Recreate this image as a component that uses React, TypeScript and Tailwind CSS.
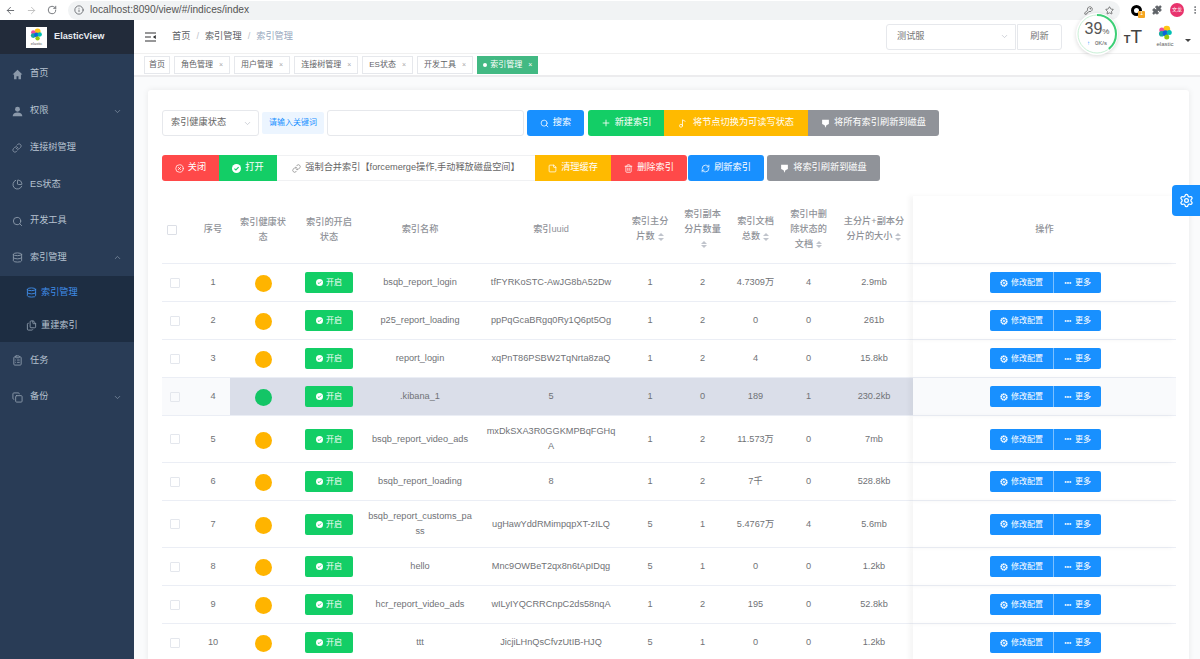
import type { ReactNode } from "react";
import {
  ArrowLeft,
  ArrowRight,
  ChartPie,
  ChevronDown,
  ChevronUp,
  CircleX,
  ClipboardList,
  Copy,
  Database,
  Ellipsis,
  EllipsisVertical,
  Files,
  Info,
  KeyRound,
  Link,
  Music2,
  Plus,
  Puzzle,
  RefreshCw,
  RotateCw,
  Search,
  Settings,
  Star,
  StickyNote,
  Trash2,
} from "lucide-react";

interface IndexRow {
  id: number;
  name: string;
  uuid: string;
  primary: number;
  replica: number;
  docs: string;
  deleted: number;
  size: string;
  green?: boolean;
}

const rows: IndexRow[] = [
  { id: 1, name: "bsqb_report_login", uuid: "tfFYRKoSTC-AwJG8bA52Dw", primary: 1, replica: 2, docs: "4.7309万", deleted: 4, size: "2.9mb" },
  { id: 2, name: "p25_report_loading", uuid: "ppPqGcaBRgq0Ry1Q6pt5Og", primary: 1, replica: 2, docs: "0", deleted: 0, size: "261b" },
  { id: 3, name: "report_login", uuid: "xqPnT86PSBW2TqNrta8zaQ", primary: 1, replica: 2, docs: "4", deleted: 0, size: "15.8kb" },
  { id: 4, name: ".kibana_1", uuid: "5", primary: 1, replica: 0, docs: "189", deleted: 1, size: "230.2kb", green: true },
  { id: 5, name: "bsqb_report_video_ads", uuid: "mxDkSXA3R0GGKMPBqFGHqA", primary: 1, replica: 2, docs: "11.573万", deleted: 0, size: "7mb" },
  { id: 6, name: "bsqb_report_loading", uuid: "8", primary: 1, replica: 2, docs: "7千", deleted: 0, size: "528.8kb" },
  { id: 7, name: "bsqb_report_customs_pass", uuid: "ugHawYddRMimpqpXT-zILQ", primary: 5, replica: 1, docs: "5.4767万", deleted: 4, size: "5.6mb" },
  { id: 8, name: "hello", uuid: "Mnc9OWBeT2qx8n6tApIDqg", primary: 5, replica: 1, docs: "0", deleted: 0, size: "1.2kb" },
  { id: 9, name: "hcr_report_video_ads", uuid: "wILyIYQCRRCnpC2ds58nqA", primary: 1, replica: 2, docs: "195", deleted: 0, size: "52.8kb" },
  { id: 10, name: "ttt", uuid: "JicjiLHnQsCfvzUtIB-HJQ", primary: 5, replica: 1, docs: "0", deleted: 0, size: "1.2kb" },
];

const tabs = ["角色管理", "用户管理", "连接树管理", "ES状态", "开发工具"];

function HomeIcon() {
  return (
    <svg viewBox="0 0 16 16" className="h-[11px] w-[11px]" fill="currentColor">
      <path d="M8 1 0.8 8H3v7h3.6v-4.5h2.8V15H13V8h2.2z" />
    </svg>
  );
}

function UserIcon() {
  return (
    <svg viewBox="0 0 16 16" className="h-[11px] w-[11px]" fill="currentColor">
      <circle cx="8" cy="4.6" r="3.6" />
      <path d="M1 15c0-3.6 2.6-5.6 7-5.6s7 2 7 5.6z" />
    </svg>
  );
}

function FlushIcon() {
  return (
    <svg viewBox="0 0 12 12" className="h-[9px] w-[9px]" fill="currentColor">
      <path d="M1.5 1h9v5.6L7.2 8.4 6 11.5 4.8 8.4 1.5 6.6z" />
    </svg>
  );
}

function CheckDot({ className }: { className: string }) {
  return (
    <svg viewBox="0 0 12 12" className={className}>
      <circle cx="6" cy="6" r="6" fill="#fff" />
      <path d="M3.2 6.2 5.2 8l3.6-3.8" fill="none" stroke="currentColor" strokeWidth="1.5" />
    </svg>
  );
}

function SmallGear() {
  return (
    <svg viewBox="0 0 12 12" className="h-[8px] w-[8px]">
      <circle cx="6" cy="6" r="4.2" fill="none" stroke="#fff" strokeWidth="2.6" strokeDasharray="2 0.5" />
      <circle cx="6" cy="6" r="1.4" fill="#fff" />
    </svg>
  );
}

function ElasticLogo({ className }: { className: string }) {
  return (
    <svg viewBox="0 0 24 24" className={className}>
      <circle cx="14" cy="6.5" r="5.5" fill="#fec514" />
      <circle cx="6" cy="8" r="4" fill="#f04e98" />
      <circle cx="6" cy="14" r="4.5" fill="#17a8a0" />
      <circle cx="12" cy="13" r="4.5" fill="#0b64dd" />
      <circle cx="18" cy="12" r="4" fill="#00bfb3" />
      <circle cx="14" cy="19" r="4" fill="#93c90e" />
    </svg>
  );
}

function SideItem({ icon, label, caret }: { icon: ReactNode; label: string; caret?: "up" | "down" }) {
  return (
    <div className="flex h-[36.7px] items-center pl-[12px] pr-[12px] text-[9.2px] text-[#b7c3d1]">
      <span className="flex w-[17px] shrink-0 text-[#8b99aa]">{icon}</span>
      <span className="ml-[1px]">{label}</span>
      {caret === "down" && <ChevronDown className="ml-auto h-[9px] w-[9px] text-[#7f8fa3]" />}
      {caret === "up" && <ChevronUp className="ml-auto h-[9px] w-[9px] text-[#7f8fa3]" />}
    </div>
  );
}

function Sidebar() {
  return (
    <aside className="flex w-[134px] shrink-0 flex-col bg-[#293c56]">
      <div className="flex h-[34px] shrink-0 items-center bg-[#222b3a] pl-[26px]">
        <div className="flex h-[21px] w-[21px] flex-col items-center justify-center bg-white">
          <ElasticLogo className="h-[13px] w-[13px]" />
          <span className="text-[4px] leading-[5px] text-[#555]">elastic</span>
        </div>
        <span className="ml-[7px] text-[9.2px] font-bold text-[#e8ecf1]">ElasticView</span>
      </div>
      <div className="pt-[2px]">
        <SideItem icon={<HomeIcon />} label="首页" />
        <SideItem icon={<UserIcon />} label="权限" caret="down" />
        <SideItem icon={<Link className="h-[10px] w-[10px]" />} label="连接树管理" />
        <SideItem icon={<ChartPie className="h-[11px] w-[11px]" />} label="ES状态" />
        <SideItem icon={<Search className="h-[11px] w-[11px]" />} label="开发工具" />
        <SideItem icon={<Database className="h-[11px] w-[11px]" />} label="索引管理" caret="up" />
      </div>
      <div className="bg-[#1d2d42] text-[9.2px]">
        <div className="flex h-[33px] items-center pl-[26px] text-[#3f8ce8]">
          <Database className="h-[11px] w-[11px]" />
          <span className="ml-[4px]">索引管理</span>
        </div>
        <div className="flex h-[33px] items-center pl-[26px] text-[#b7c3d1]">
          <Files className="h-[11px] w-[11px] text-[#8b99aa]" />
          <span className="ml-[4px]">重建索引</span>
        </div>
      </div>
      <SideItem icon={<ClipboardList className="h-[11px] w-[11px]" />} label="任务" />
      <SideItem icon={<Copy className="h-[11px] w-[11px]" />} label="备份" caret="down" />
    </aside>
  );
}

function BrowserBar() {
  return (
    <div className="flex h-[20px] items-center bg-white text-[#5f6368]">
      <ArrowLeft className="ml-[5px] h-[11px] w-[11px]" />
      <ArrowRight className="ml-[10px] h-[11px] w-[11px] text-[#bdbdbd]" />
      <RotateCw className="ml-[10px] h-[10px] w-[10px]" />
      <div className="ml-[11px] flex h-[19px] w-[1054px] items-center rounded-full bg-[#f1f3f4] pl-[6px] pr-[6px]">
        <Info className="h-[10px] w-[10px]" />
        <span className="ml-[6px] text-[10.2px] text-[#555]">localhost:8090/view/#/indices/index</span>
        <KeyRound className="ml-auto h-[9px] w-[9px] text-[#555]" />
        <Star className="ml-[12px] h-[9px] w-[9px] text-[#555]" />
      </div>
      <div className="relative ml-[11px] h-[11px] w-[11px] rounded-full border-[3px] border-black">
        <span className="absolute left-[4px] top-[3px] flex h-[7px] w-[7px] items-center justify-center rounded-[1px] bg-[#f5a623] text-[5px] text-white">1</span>
      </div>
      <Puzzle className="ml-[10px] h-[10px] w-[10px] fill-[#5f6368]" />
      <div className="ml-[8px] flex h-[14px] w-[14px] items-center justify-center rounded-full bg-[#e8336d] text-[5px] text-white">文龙</div>
      <EllipsisVertical className="ml-[6px] h-[10px] w-[10px]" />
    </div>
  );
}

function TopBar() {
  return (
    <div className="flex h-[34px] shrink-0 items-center border-b border-[#f0f0f0] bg-white pl-[11px]">
      <svg viewBox="0 0 12 10" className="h-[10px] w-[11px]" fill="#303133">
        <path d="M0 0h12v1.2H0zM0 4.4h6.5v1.2H0zM0 8.8h12V10H0zM11.8 2.8v4.4L8.6 5z" />
      </svg>
      <div className="ml-[16px] flex items-center text-[9.2px] text-[#606266]">
        <span>首页</span>
        <span className="mx-[6px] text-[#c0c4cc]">/</span>
        <span>索引管理</span>
        <span className="mx-[6px] text-[#c0c4cc]">/</span>
        <span className="text-[#97a8be]">索引管理</span>
      </div>
      <div className="ml-auto flex items-center">
        <div className="flex h-[26px] w-[130px] items-center justify-between rounded-l-[3px] border border-[#e6e8ec] pl-[10px] pr-[6px] text-[9.2px] text-[#777]">
          测试服
          <ChevronDown className="h-[9px] w-[9px] text-[#c0c4cc]" />
        </div>
        <div className="ml-[1px] flex h-[26px] w-[45px] items-center justify-center rounded-r-[3px] border border-[#e6e8ec] text-[9.2px] text-[#777]">刷新</div>
        <div className="ml-[59px] flex w-[24px] items-baseline justify-center text-[#444]">
          <span className="text-[11px] font-bold leading-none">T</span>
          <span className="text-[19px] leading-none">T</span>
        </div>
        <div className="ml-[8px] flex w-[24px] flex-col items-center">
          <ElasticLogo className="h-[15px] w-[15px]" />
          <span className="text-[6px] leading-[8px] text-[#666]">elastic</span>
        </div>
        <span className="ml-[8px] mr-[9px] mt-[8px] h-0 w-0 border-x-[3px] border-t-[3px] border-x-transparent border-t-[#444]" />
      </div>
    </div>
  );
}

function TabsBar() {
  return (
    <div className="flex h-[23px] shrink-0 items-center gap-[4px] border-b-2 border-[#ececee] bg-white pl-[10px] pt-[1px] text-[8px] text-[#606266]">
      <span className="flex h-[18px] w-[26px] items-center justify-center border border-[#e6e8ec]">首页</span>
      {tabs.map((t) => (
        <span key={t} className="flex h-[18px] items-center gap-[6px] border border-[#e6e8ec] pl-[6px] pr-[6px]">
          {t}
          <span className="text-[7px] text-[#aaa]">×</span>
        </span>
      ))}
      <span className="flex h-[18px] items-center gap-[3px] bg-[#42b983] pl-[6px] pr-[6px] text-white">
        <span className="h-[4px] w-[4px] rounded-full bg-white" />
        索引管理
        <span className="ml-[3px] text-[7px]">×</span>
      </span>
    </div>
  );
}

function Btn({ color, icon, label, className }: { color: string; icon: ReactNode; label: string; className: string }) {
  return (
    <div className={`flex h-[26px] items-center justify-center gap-[4px] text-[9.2px] text-white ${color} ${className}`}>
      {icon}
      {label}
    </div>
  );
}

function Toolbar() {
  return (
    <div className="text-[9.2px]">
      <div className="flex h-[26px] items-center">
        <div className="flex h-[26px] w-[97px] items-center justify-between rounded-[3px] border border-[#e6e8ec] pl-[8px] pr-[6px] text-[#666]">
          索引健康状态
          <ChevronDown className="h-[9px] w-[9px] text-[#c0c4cc]" />
        </div>
        <div className="ml-[3px] flex h-[22px] w-[62px] items-center justify-center rounded-[2px] bg-[#ecf5ff] text-[8px] text-[#1890ff]">请输入关键词</div>
        <div className="ml-[3px] h-[26px] w-[197px] rounded-[3px] border border-[#e6e8ec]" />
        <Btn color="bg-[#1890ff]" className="ml-[3px] w-[57px] rounded-[3px]" icon={<Search className="h-[9px] w-[9px]" />} label="搜索" />
        <Btn color="bg-[#13ce66]" className="ml-[4px] w-[76px] rounded-l-[3px]" icon={<Plus className="h-[10px] w-[10px]" />} label="新建索引" />
        <Btn color="bg-[#ffba00]" className="w-[144px]" icon={<Music2 className="mr-[2px] h-[9px] w-[9px]" />} label="将节点切换为可读写状态" />
        <Btn color="bg-[#909399]" className="w-[131px] rounded-r-[3px]" icon={<FlushIcon />} label="将所有索引刷新到磁盘" />
      </div>
      <div className="mt-[19px] flex h-[26px] items-center">
        <Btn color="bg-[#ff4949]" className="w-[57px] rounded-l-[3px]" icon={<CircleX className="h-[9px] w-[9px]" />} label="关闭" />
        <Btn color="bg-[#13ce66]" className="w-[58px]" icon={<CheckDot className="h-[9px] w-[9px] text-[#13ce66]" />} label="打开" />
        <Btn color="bg-white" className="w-[258px] border-y border-[#f0f1f3] !text-[#666]" icon={<Link className="h-[9px] w-[9px] text-[#888]" />} label="强制合并索引【forcemerge操作,手动释放磁盘空间】" />
        <Btn color="bg-[#ffba00]" className="w-[76px]" icon={<StickyNote className="h-[9px] w-[9px]" />} label="清理缓存" />
        <Btn color="bg-[#ff4949]" className="w-[76px] rounded-r-[3px]" icon={<Trash2 className="h-[9px] w-[9px]" />} label="删除索引" />
        <Btn color="bg-[#1890ff]" className="ml-[1px] w-[76px] rounded-[3px]" icon={<RefreshCw className="h-[9px] w-[9px]" />} label="刷新索引" />
        <Btn color="bg-[#909399]" className="ml-[3px] w-[113px] rounded-[3px]" icon={<FlushIcon />} label="将索引刷新到磁盘" />
      </div>
    </div>
  );
}

function SortCaret() {
  return (
    <span className="ml-[3px] inline-flex h-[15px] flex-col items-center justify-center gap-[1.5px] align-middle">
      <span className="h-0 w-0 border-x-[3px] border-b-[3.5px] border-x-transparent border-b-[#c0c4cc]" />
      <span className="h-0 w-0 border-x-[3px] border-t-[3.5px] border-x-transparent border-t-[#c0c4cc]" />
    </span>
  );
}

function IndexTable() {
  const th = "border-b border-[#ebeef5] px-[6px] text-center align-middle text-[9.2px] font-medium leading-[15px] text-[#8f9298]";
  const td = "border-b border-[#ebeef5] text-center align-middle text-[9.2px] leading-[15px] text-[#707276]";

  return (
    <table className="mt-[15px] w-[1014px] table-fixed border-separate border-spacing-0">
      <colgroup>
        <col className="w-[34px]" />
        <col className="w-[34px]" />
        <col className="w-[66px]" />
        <col className="w-[66px]" />
        <col className="w-[116px]" />
        <col className="w-[146px]" />
        <col className="w-[52px]" />
        <col className="w-[53px]" />
        <col className="w-[53px]" />
        <col className="w-[53px]" />
        <col className="w-[78px]" />
        <col />
      </colgroup>
      <thead>
        <tr className="h-[68px]">
          <th className={`${th} !px-0 text-left`}>
            <span className="ml-[5px] block h-[10px] w-[10px] rounded-[1px] border border-[#dcdfe6]" />
          </th>
          <th className={th}>序号</th>
          <th className={th}>索引健康状态</th>
          <th className={th}>索引的开启状态</th>
          <th className={th}>索引名称</th>
          <th className={th}>索引uuid</th>
          <th className={th}>索引主分片数<SortCaret /></th>
          <th className={th}>索引副本分片数量<SortCaret /></th>
          <th className={th}>索引文档总数<SortCaret /></th>
          <th className={th}>索引中删除状态的文档<SortCaret /></th>
          <th className={th}>主分片+副本分分片的大小<SortCaret /></th>
          <th className={`${th} shadow-[-4px_0_5px_rgba(0,0,0,0.04)]`}>操作</th>
        </tr>
      </thead>
      <tbody>
        {rows.map((r) => {
          const hl = r.green ? "bg-[#dadee9]" : "";
          const soft = r.green ? "bg-[#f9fafc]" : "";
          const tall = r.id === 5 || r.id === 7;
          return (
            <tr key={r.id} className={tall ? "h-[47px]" : "h-[38px]"}>
              <td className={`${td} ${soft}`}>
                <span className="ml-[8px] block h-[10px] w-[10px] rounded-[1px] border border-[#e4e7ed]" />
              </td>
              <td className={`${td} ${soft}`}>{r.id}</td>
              <td className={`${td} ${hl}`}>
                <span className={`mx-auto mt-[2px] block h-[17px] w-[17px] rounded-full ${r.green ? "bg-[#13c566]" : "bg-[#ffb400]"}`} />
              </td>
              <td className={`${td} ${hl}`}>
                <div className="mx-auto flex h-[21px] w-[48px] items-center justify-center gap-[3px] rounded-[2px] bg-[#13ce66] text-[8px] text-white">
                  <CheckDot className="h-[7px] w-[7px] text-[#13ce66]" />
                  开启
                </div>
              </td>
              <td className={`${td} ${hl} break-all px-[6px]`}>{r.name}</td>
              <td className={`${td} ${hl} break-all px-[6px]`}>{r.uuid}</td>
              <td className={`${td} ${hl}`}>{r.primary}</td>
              <td className={`${td} ${hl}`}>{r.replica}</td>
              <td className={`${td} ${hl}`}>{r.docs}</td>
              <td className={`${td} ${hl}`}>{r.deleted}</td>
              <td className={`${td} ${hl}`}>{r.size}</td>
              <td className={`${td} ${soft} shadow-[-4px_0_5px_rgba(0,0,0,0.04)]`}>
                <div className="ml-[77px] flex h-[21px] w-[111px] overflow-hidden rounded-[2px] bg-[#1890ff] text-[8px] text-white">
                  <div className="flex w-[64px] items-center justify-center gap-[3px] border-r border-[#7cc0ff]">
                    <SmallGear />
                    修改配置
                  </div>
                  <div className="flex flex-1 items-center justify-center gap-[3px]">
                    <Ellipsis className="h-[8px] w-[8px]" strokeWidth={4} />
                    更多
                  </div>
                </div>
              </td>
            </tr>
          );
        })}
      </tbody>
    </table>
  );
}

function SpeedBall() {
  return (
    <div className="absolute left-[1076px] top-[13px] z-10 h-[42px] w-[42px] rounded-full bg-white shadow-[0_1px_4px_rgba(0,0,0,0.15)]">
      <svg viewBox="0 0 42 42" className="absolute inset-0 h-[42px] w-[42px]">
        <circle cx="21" cy="21" r="19" fill="none" stroke="#c9f0d6" strokeWidth="1" />
        <circle cx="21" cy="21" r="19" fill="none" stroke="#3ecf76" strokeWidth="2" strokeDasharray="46.6 119.4" transform="rotate(-90 21 21)" />
      </svg>
      <div className="absolute left-0 right-0 top-[8px] text-center text-[16px] leading-[16px] text-[#555]">
        39<span className="text-[8px]">%</span>
      </div>
      <div className="absolute left-0 right-0 top-[26px] flex items-center justify-center gap-[5px] text-[6px] leading-[8px] text-[#555]">
        <span className="text-[#1890ff]">↑</span>
        0K/s
      </div>
    </div>
  );
}

export default function App() {
  return (
    <div className="relative h-[659px] w-[1200px] overflow-hidden bg-white font-['Liberation_Sans','Noto_Sans_CJK_SC',sans-serif]">
      <BrowserBar />
      <div className="flex h-[639px]">
        <Sidebar />
        <main className="flex min-w-0 flex-1 flex-col bg-[#fafbfc]">
          <TopBar />
          <TabsBar />
          <div className="ml-[14px] mr-[11px] mt-[13px] shrink-0 rounded-t-[3px] bg-white pl-[14px] pr-[13px] pt-[20px] shadow-[0_0_6px_rgba(0,0,0,0.08)]">
            <Toolbar />
            <IndexTable />
          </div>
        </main>
      </div>
      <SpeedBall />
      <div className="absolute right-0 top-[185px] flex h-[31px] w-[28px] items-center justify-center rounded-l-[4px] bg-[#1890ff] text-white">
        <Settings className="h-[15px] w-[15px]" />
      </div>
    </div>
  );
}
